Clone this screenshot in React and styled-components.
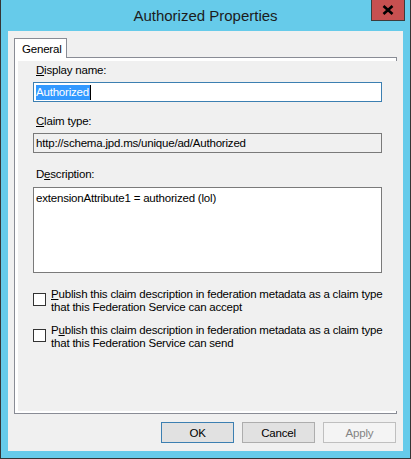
import styled, { createGlobalStyle } from "styled-components";

const GlobalStyle = createGlobalStyle`
    html, body {
        margin: 0;
        padding: 0;
        background: #ffffff;
    }
    body {
        font-family: "Liberation Sans", Arial, sans-serif;
        font-size: 11.5px;
        letter-spacing: -0.2px;
        color: #000;
    }
`;

const Frame = styled.div`
    box-sizing: border-box;
    width: 411px;
    height: 459px;
    background: #66cbea;
    border: 1px solid #353535;
    border-top: none;
    display: flex;
    flex-direction: column;
    padding: 0 7px 7px 7px;
    position: relative;
`;

const TitleBar = styled.div`
    height: 31px;
    flex: none;
    display: flex;
    align-items: center;
    justify-content: center;
    font-size: 15px;
    letter-spacing: 0;
    color: #1c1c1c;
    padding-bottom: 1px;
    box-sizing: border-box;
`;

const CloseButton = styled.div`
    position: absolute;
    top: 0;
    right: 5px;
    width: 34px;
    height: 21px;
    box-sizing: border-box;
    background: #c75050;
    border: 1px solid #3c3c3c;
    border-top: none;
    display: flex;
    align-items: center;
    justify-content: center;
`;

const Body = styled.div`
    flex: 1;
    background: #f0f0f0;
    display: flex;
    flex-direction: column;
    padding: 7px 6px 8px 6px;
`;

const TabStrip = styled.div`
    display: flex;
    height: 19px;
    flex: none;
`;

const Tab = styled.div`
    box-sizing: border-box;
    height: 20px;
    width: 53px;
    background: #ffffff;
    border: 1px solid #898c95;
    border-bottom: none;
    position: relative;
    z-index: 1;
    padding: 3px 0 0 7px;
    line-height: 14px;
`;

const Panel = styled.div`
    flex: 1;
    background: #ffffff;
    border: 1px solid #898c95;
    padding: 3px 2px 2px 3px;
    display: flex;
`;

const Page = styled.div`
    flex: 1;
    background: #f0f0f0;
    padding: 2px 17px 0 15px;
    display: flex;
    flex-direction: column;
`;

const Field = styled.div`
    display: flex;
    flex-direction: column;
    margin-top: ${(p) => p.$top || 0}px;
`;

const Label = styled.div`
    line-height: 15px;
    padding-left: 3px;
    margin-bottom: ${(p) => p.$gap || 4}px;
    u {
        text-decoration: underline;
        text-underline-offset: 1px;
    }
`;

const TextBox = styled.div`
    box-sizing: border-box;
    height: ${(p) => p.$height || 20}px;
    border: 1px solid ${(p) => (p.$focused ? "#3c7fb1" : "#7a7a7a")};
    background: ${(p) => (p.$readOnly ? "#f0f0f0" : "#ffffff")};
    padding: ${(p) => (p.$multi ? "3px 2px" : "0 2px")};
    display: flex;
    align-items: ${(p) => (p.$multi ? "flex-start" : "center")};
    line-height: 15px;
    white-space: nowrap;
    overflow: hidden;
`;

const Selected = styled.span`
    background: #3399ff;
    color: #ffffff;
    line-height: 15px;
    padding: 0 1px 0 0;
`;

const Caret = styled.span`
    display: inline-block;
    width: 1px;
    height: 15px;
    background: #000;
`;

const CheckRow = styled.div`
    display: flex;
    align-items: flex-start;
    margin-top: ${(p) => p.$top || 0}px;
`;

const CheckBox = styled.div`
    box-sizing: border-box;
    width: 13px;
    height: 13px;
    border: 1px solid #333333;
    background: #ffffff;
    margin-top: 5px;
    flex: none;
`;

const CheckText = styled.div`
    margin-left: 5px;
    line-height: 13px;
    white-space: nowrap;
    u {
        text-decoration: underline;
    }
`;

const ButtonRow = styled.div`
    display: flex;
    justify-content: flex-end;
    gap: 8px;
    margin-top: 8px;
    padding-right: 1px;
`;

const Button = styled.div`
    box-sizing: border-box;
    width: 73px;
    height: 21px;
    display: flex;
    align-items: center;
    justify-content: center;
    background: ${(p) => (p.$disabled ? "#f4f4f4" : "#e1e1e1")};
    border: 1px solid ${(p) => (p.$default ? "#3c7fb1" : p.$disabled ? "#bfbfbf" : "#adadad")};
    color: ${(p) => (p.$disabled ? "#838383" : "#000")};
`;

export default function App() {
    return (
        <>
            <GlobalStyle />
            <Frame>
                <TitleBar>Authorized Properties</TitleBar>
                <CloseButton>
                    <svg width="12" height="10" viewBox="0 0 12 10">
                        <path d="M1.5 1 L10.5 9 M10.5 1 L1.5 9" stroke="#000" strokeWidth="2.6" strokeLinecap="butt" />
                    </svg>
                </CloseButton>
                <Body>
                    <TabStrip>
                        <Tab>General</Tab>
                    </TabStrip>
                    <Panel>
                        <Page>
                            <Field>
                                <Label><u>D</u>isplay name:</Label>
                                <TextBox $focused>
                                    <Selected>Authorized</Selected>
                                    <Caret />
                                </TextBox>
                            </Field>
                            <Field $top={12}>
                                <Label><u>C</u>laim type:</Label>
                                <TextBox $readOnly>http://schema.jpd.ms/unique/ad/Authorized</TextBox>
                            </Field>
                            <Field $top={14}>
                                <Label $gap={5}>D<u>e</u>scription:</Label>
                                <TextBox $multi $height={86}>extensionAttribute1 = authorized (lol)</TextBox>
                            </Field>
                            <CheckRow $top={15}>
                                <CheckBox />
                                <CheckText>
                                    <u>P</u>ublish this claim description in federation metadata as a claim type<br />
                                    that this Federation Service can accept
                                </CheckText>
                            </CheckRow>
                            <CheckRow $top={10}>
                                <CheckBox />
                                <CheckText>
                                    P<u>u</u>blish this claim description in federation metadata as a claim type<br />
                                    that this Federation Service can send
                                </CheckText>
                            </CheckRow>
                        </Page>
                    </Panel>
                    <ButtonRow>
                        <Button $default>OK</Button>
                        <Button>Cancel</Button>
                        <Button $disabled>Apply</Button>
                    </ButtonRow>
                </Body>
            </Frame>
        </>
    );
}
